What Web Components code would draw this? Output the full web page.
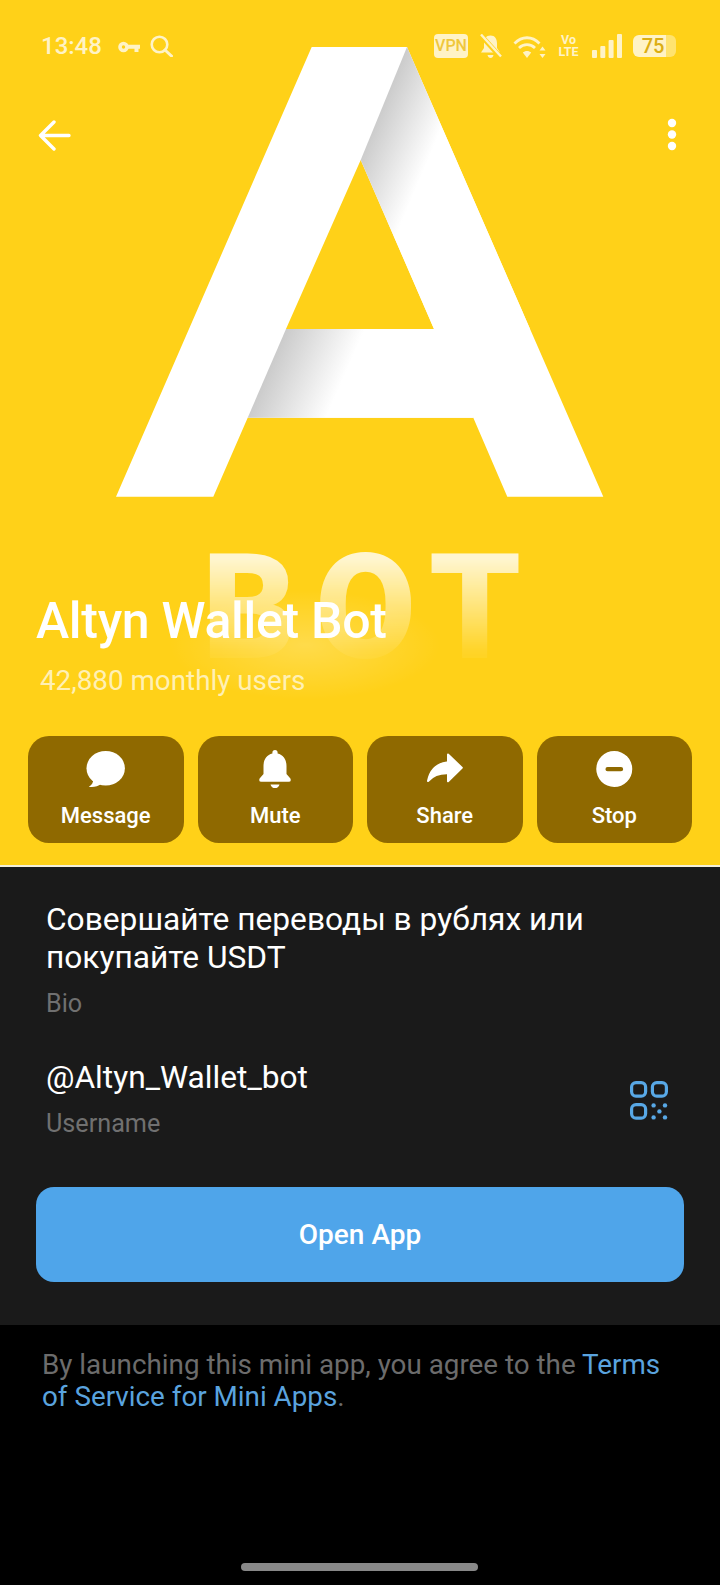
<!DOCTYPE html>
<html>
<head>
<meta charset="utf-8">
<title>Altyn Wallet Bot</title>
<style>
  html, body { margin: 0; padding: 0; background: #000; }
  body { width: 720px; height: 1585px; overflow: hidden; font-family: Roboto, "Liberation Sans", sans-serif; }
</style>
</head>
<body>
<profile-page>
  <profile-hero slot="hero" name="Altyn Wallet Bot" users="42,880 monthly users">
    <action-button label="Message" icon="message"></action-button>
    <action-button label="Mute" icon="mute"></action-button>
    <action-button label="Share" icon="share"></action-button>
    <action-button label="Stop" icon="stop"></action-button>
  </profile-hero>
  <info-card slot="info">
    <info-row label="Bio">Совершайте переводы в рублях или покупайте USDT</info-row>
    <info-row label="Username" qr>@Altyn_Wallet_bot</info-row>
    <open-button>Open App</open-button>
  </info-card>
  <terms-note slot="terms"></terms-note>
</profile-page>

<script>
const templateStatusBar = /* HTML */ `
  <style>
    :host {
      display: flex;
      align-items: center;
      height: 24px;
      padding: 34px 44px 0 41px;
      color: #fff3c6;
      font-family: Roboto, sans-serif;
    }
    .time { font-size: 24px; font-weight: 500; line-height: 24px; width: 77px; }
    svg { display: block; flex: none; }
    .fill { flex: 1; }
    .vpn {
      width: 34px; height: 24px; border-radius: 4px; background: #fff3c6; color: #efc73c;
      font-size: 16px; font-weight: 500; line-height: 24px; text-align: center;
    }
    .volte { width: 21px; font-size: 12.5px; font-weight: 700; line-height: 12px; text-align: center; white-space: nowrap; }
    .battery { position: relative; width: 43px; height: 22px; }
    .battery i {
      position: absolute; inset: 0; border-radius: 6px;
      background: linear-gradient(90deg, #fff3c6 0 76%, #ffe36f 76% 100%);
    }
    .battery b {
      position: relative; display: block; font-size: 20px; font-weight: 500; line-height: 22px;
      color: #dcae12; text-align: center; padding-right: 3px;
    }
  </style>
  <span class="time">13:48</span>
  <svg width="22" height="12" viewBox="0 0 22 12" fill="none" style="margin-top:1px">
    <circle cx="5.5" cy="6" r="3.5" stroke="currentColor" stroke-width="3.6"/>
    <path d="M9 3.8H22V7.8H20.5V11H16.5V7.8H9Z" fill="currentColor"/>
  </svg>
  <svg width="23" height="22" viewBox="0 0 23 22" fill="none" style="margin-left:10px">
    <circle cx="9.5" cy="9.5" r="7.8" stroke="currentColor" stroke-width="2.6"/>
    <path d="M15 15L21.5 21" stroke="currentColor" stroke-width="3" stroke-linecap="round"/>
  </svg>
  <span class="fill"></span>
  <span class="vpn">VPN</span>
  <svg width="23" height="24" viewBox="0 0 23 24" style="margin-left:11px">
    <path d="M11.5 1.5C16 1.5 18 5 18 9.5V14L21 18.5H2L5 14V9.5C5 5 7 1.5 11.5 1.5Z" fill="currentColor"/>
    <path d="M8.5 21H14.5C14 23 13 24 11.5 24S9 23 8.5 21Z" fill="currentColor"/>
    <path d="M1.5 1L21.5 23" stroke="#ffd118" stroke-width="5"/>
    <path d="M2 .5L22 22.5" stroke="currentColor" stroke-width="2.4"/>
  </svg>
  <svg width="33" height="23" viewBox="0 0 33 23" fill="none" style="margin-left:11px">
    <path d="M1.5 8.5C9 .8 19 .8 26.5 8.5" stroke="currentColor" stroke-width="2.8"/>
    <path d="M6 13C10.5 8.6 17.5 8.6 22 13" stroke="currentColor" stroke-width="2.8"/>
    <path d="M14 23L9.8 17.6C12 15.4 16 15.4 18.2 17.6Z" fill="currentColor"/>
    <path d="M29.5 11.5L32.5 15.5H26.5Z M29.5 23L26.5 19H32.5Z" fill="currentColor"/>
  </svg>
  <span class="volte" style="margin-left:12px">Vo<br>LTE</span>
  <svg width="30" height="24" viewBox="0 0 30 24" style="margin-left:13px">
    <rect x="0" y="16" width="5" height="8" rx="1" fill="currentColor"/>
    <rect x="8.3" y="12" width="5" height="12" rx="1" fill="currentColor"/>
    <rect x="16.6" y="6" width="5" height="18" rx="1" fill="currentColor"/>
    <rect x="25" y="0" width="5" height="24" rx="1" fill="currentColor"/>
  </svg>
  <span class="battery" style="margin-left:11px"><i></i><b>75</b></span>
`;

class StatusBar extends HTMLElement {
  constructor() {
    super();
    this.attachShadow({ mode: "open" });
    this.shadowRoot.innerHTML = templateStatusBar;
  }
}
customElements.define("status-bar", StatusBar);

const actionIcons = {
  message: /* HTML */ `
    <ellipse cx="21.7" cy="20.3" rx="19.2" ry="17.3"/>
    <path d="M9 31C9.5 34.5 8 37 4.8 38.8C9.5 39.6 14 38.4 17 36Z"/>`,
  mute: /* HTML */ `
    <path d="M22 2A2.6 2.6 0 0 1 24.6 4.6V5.6C30.6 7 33.5 12 33.5 18V26L37.4 30.6Q38.6 33.8 35.6 33.8H8.4Q5.4 33.8 6.6 30.6L10.5 26V18C10.5 12 13.4 7 19.4 5.6V4.6A2.6 2.6 0 0 1 22 2Z"/>
    <path d="M17.5 36.4H26.5C26 38.8 24 40 22 40S18 38.8 17.5 36.4Z"/>`,
  share: /* HTML */ `
    <path d="M25 6.5L38.8 19.7L25 33.2V25.3C15.5 25 10 27.5 5 33C7 23 13 15.5 25 14.3Z"
      stroke="#fff" stroke-width="2" stroke-linejoin="round"/>`,
  stop: /* HTML */ `
    <path fill-rule="evenodd" d="M22.3 3A18 18 0 1 1 22.2 39A18 18 0 0 1 22.3 3ZM15.6 19A2.1 2.1 0 0 0 15.6 23.3H29A2.1 2.1 0 0 0 29 19Z"/>`,
};

class ActionButton extends HTMLElement {
  constructor() {
    super();
    this.attachShadow({ mode: "open" });
    this.shadowRoot.innerHTML = /* HTML */ `
      <style>
        :host {
          display: flex;
          flex-direction: column;
          align-items: center;
          box-sizing: border-box;
          height: 107px;
          padding-top: 12px;
          background: #8f6900;
          border-radius: 21px;
          color: #fff;
        }
        svg { display: block; fill: #fff; }
        span { margin-top: 13px; font-size: 22px; font-weight: 500; line-height: 26px; }
      </style>
      <svg width="44" height="42" viewBox="0 0 44 42">${actionIcons[this.getAttribute("icon")]}</svg>
      <span>${this.getAttribute("label")}</span>
    `;
  }
}
customElements.define("action-button", ActionButton);

class ProfileHero extends HTMLElement {
  constructor() {
    super();
    this.attachShadow({ mode: "open" });
    this.shadowRoot.innerHTML = /* HTML */ `
      <style>
        :host {
          display: flex;
          flex-direction: column;
          position: relative;
          box-sizing: border-box;
          height: 867px;
          background: #ffd118;
          border-bottom: 2px solid #f4efd8;
          overflow: hidden;
          color: #fff;
        }
        .logo { position: absolute; left: 0; top: 0; }
        .ghost {
          position: absolute;
          left: 202px;
          top: 524px;
          font-family: Roboto, sans-serif;
          font-size: 146px;
          font-weight: 900;
          line-height: 170px;
          letter-spacing: 19px;
          color: #fff;
          opacity: 0.8;
          -webkit-mask-image: linear-gradient(180deg, #000 20%, rgba(0,0,0,.3) 62%, rgba(0,0,0,.1) 74%, transparent 86%);
          mask-image: linear-gradient(180deg, #000 20%, rgba(0,0,0,.3) 62%, rgba(0,0,0,.1) 74%, transparent 86%);
        }
        .glow {
          position: absolute;
          left: 170px;
          top: 590px;
          width: 270px;
          height: 110px;
          background: radial-gradient(closest-side, rgba(255,255,255,.22), rgba(255,255,255,0));
        }
        .content { position: relative; display: flex; flex-direction: column; flex: 1; }
        .toolbar {
          display: flex;
          justify-content: space-between;
          align-items: center;
          height: 32px;
          padding: 61px 43px 0 38px;
        }
        svg { display: block; }
        h1 {
          margin: auto 0 0;
          padding-left: 36px;
          font-size: 50px;
          font-weight: 500;
          line-height: 54px;
          letter-spacing: -0.3px;
          white-space: nowrap;
        }
        p {
          margin: 16px 0 0;
          padding-left: 40px;
          font-size: 27.8px;
          line-height: 34px;
          color: #fff0b4;
        }
        .actions {
          display: grid;
          grid-template-columns: repeat(4, 1fr);
          gap: 14px;
          margin: 38px 28px 22px 28px;
        }
      </style>
      <svg class="logo" width="720" height="520" viewBox="0 0 720 520">
        <defs>
          <linearGradient id="rightLeg" gradientUnits="userSpaceOnUse" x1="384" y1="100" x2="443" y2="125">
            <stop offset="0" stop-color="#cbcbcb"/>
            <stop offset="1" stop-color="#fff"/>
          </linearGradient>
          <linearGradient id="crossBar" gradientUnits="userSpaceOnUse" x1="267" y1="373" x2="333" y2="402">
            <stop offset="0" stop-color="#cbcbcb"/>
            <stop offset="1" stop-color="#fff"/>
          </linearGradient>
        </defs>
        <path fill="#fff" fill-rule="evenodd" d="M311.7 47H407L603.3 496.7H507.3L473.3 417.7H247.7L213.3 496.7H116ZM360.7 160L286 329H434Z"/>
        <path fill="url(#rightLeg)" d="M407 47L360.7 160L434 329H530Z"/>
        <path fill="url(#crossBar)" d="M286 329L247.7 417.7H473.3L434 329Z"/>
      </svg>
      <div class="ghost">BOT</div>
      <div class="glow"></div>
      <div class="content">
        <status-bar></status-bar>
        <div class="toolbar">
          <svg width="33" height="31" viewBox="0 0 33 31" fill="none" stroke="#fff" stroke-width="3.4" stroke-linecap="round" stroke-linejoin="round">
            <path d="M2.5 15.5H31M16 2L2.5 15.5L16 29"/>
          </svg>
          <svg width="10" height="34" viewBox="0 0 10 34" fill="#fff">
            <circle cx="5" cy="5" r="4.2"/><circle cx="5" cy="16.5" r="4.2"/><circle cx="5" cy="28" r="4.2"/>
          </svg>
        </div>
        <h1>${this.getAttribute("name")}</h1>
        <p>${this.getAttribute("users")}</p>
        <div class="actions"><slot></slot></div>
      </div>
    `;
  }
}
customElements.define("profile-hero", ProfileHero);

class InfoRow extends HTMLElement {
  constructor() {
    super();
    this.attachShadow({ mode: "open" });
    const qr = this.hasAttribute("qr")
      ? /* HTML */ `
          <svg class="qr" width="40" height="40" viewBox="0 0 40 40" fill="none" stroke="#58a8e6" stroke-width="3.2">
            <rect x="1.6" y="1.6" width="14" height="13.6" rx="4.4"/>
            <rect x="22.4" y="1.6" width="14" height="13.6" rx="4.4"/>
            <rect x="1.6" y="23.6" width="14" height="13.6" rx="4.4"/>
            <g fill="#58a8e6" stroke="none">
              <circle cx="23.6" cy="24.4" r="2.2"/><circle cx="35" cy="24.4" r="2.2"/>
              <circle cx="29.4" cy="30.4" r="2.2"/>
              <circle cx="23.6" cy="36.4" r="2.2"/><circle cx="35" cy="36.4" r="2.2"/>
            </g>
          </svg>`
      : "";
    this.shadowRoot.innerHTML = /* HTML */ `
      <style>
        :host { display: flex; align-items: center; justify-content: space-between; }
        .text { width: 560px; }
        .value { font-size: 31.7px; line-height: 38px; color: #fff; }
        .label { margin-top: 12px; font-size: 25.2px; line-height: 30px; color: #707070; }
        .qr { margin-right: 14px; margin-top: 3px; flex: none; }
      </style>
      <div class="text">
        <div class="value"><slot></slot></div>
        <div class="label">${this.getAttribute("label")}</div>
      </div>
      ${qr}
    `;
  }
}
customElements.define("info-row", InfoRow);

class OpenButton extends HTMLElement {
  constructor() {
    super();
    this.attachShadow({ mode: "open" });
    this.shadowRoot.innerHTML = /* HTML */ `
      <style>
        :host {
          display: flex;
          align-items: center;
          justify-content: center;
          height: 95px;
          margin: 8px 0 0 -10px;
          background: #4fa5ea;
          border-radius: 18px;
          color: #fff;
          font-size: 28px;
          font-weight: 500;
        }
      </style>
      <slot></slot>
    `;
  }
}
customElements.define("open-button", OpenButton);

class InfoCard extends HTMLElement {
  constructor() {
    super();
    this.attachShadow({ mode: "open" });
    this.shadowRoot.innerHTML = /* HTML */ `
      <style>
        :host {
          display: flex;
          flex-direction: column;
          gap: 40px;
          box-sizing: border-box;
          height: 458px;
          padding: 34px 36px 0 46px;
          background: #1a1a1a;
        }
      </style>
      <slot></slot>
    `;
  }
}
customElements.define("info-card", InfoCard);

class TermsNote extends HTMLElement {
  constructor() {
    super();
    this.attachShadow({ mode: "open" });
    this.shadowRoot.innerHTML = /* HTML */ `
      <style>
        :host {
          display: block;
          padding: 24px 50px 0 42px;
          font-size: 27.8px;
          line-height: 32px;
          color: #6c6c6c;
        }
        a { color: #5aa3de; text-decoration: none; }
      </style>
      By launching this mini app, you agree to the
      <a>Terms of Service for Mini Apps</a>.
    `;
  }
}
customElements.define("terms-note", TermsNote);

class ProfilePage extends HTMLElement {
  constructor() {
    super();
    this.attachShadow({ mode: "open" });
    this.shadowRoot.innerHTML = /* HTML */ `
      <style>
        :host {
          display: flex;
          flex-direction: column;
          position: relative;
          height: 1585px;
          background: #000;
          font-family: Roboto, "Liberation Sans", sans-serif;
        }
        .home {
          position: absolute;
          left: 241px;
          top: 1563px;
          width: 237px;
          height: 8px;
          border-radius: 4px;
          background: #888;
        }
      </style>
      <slot name="hero"></slot>
      <slot name="info"></slot>
      <slot name="terms"></slot>
      <div class="home"></div>
    `;
  }
}
customElements.define("profile-page", ProfilePage);
</script>
</body>
</html>
